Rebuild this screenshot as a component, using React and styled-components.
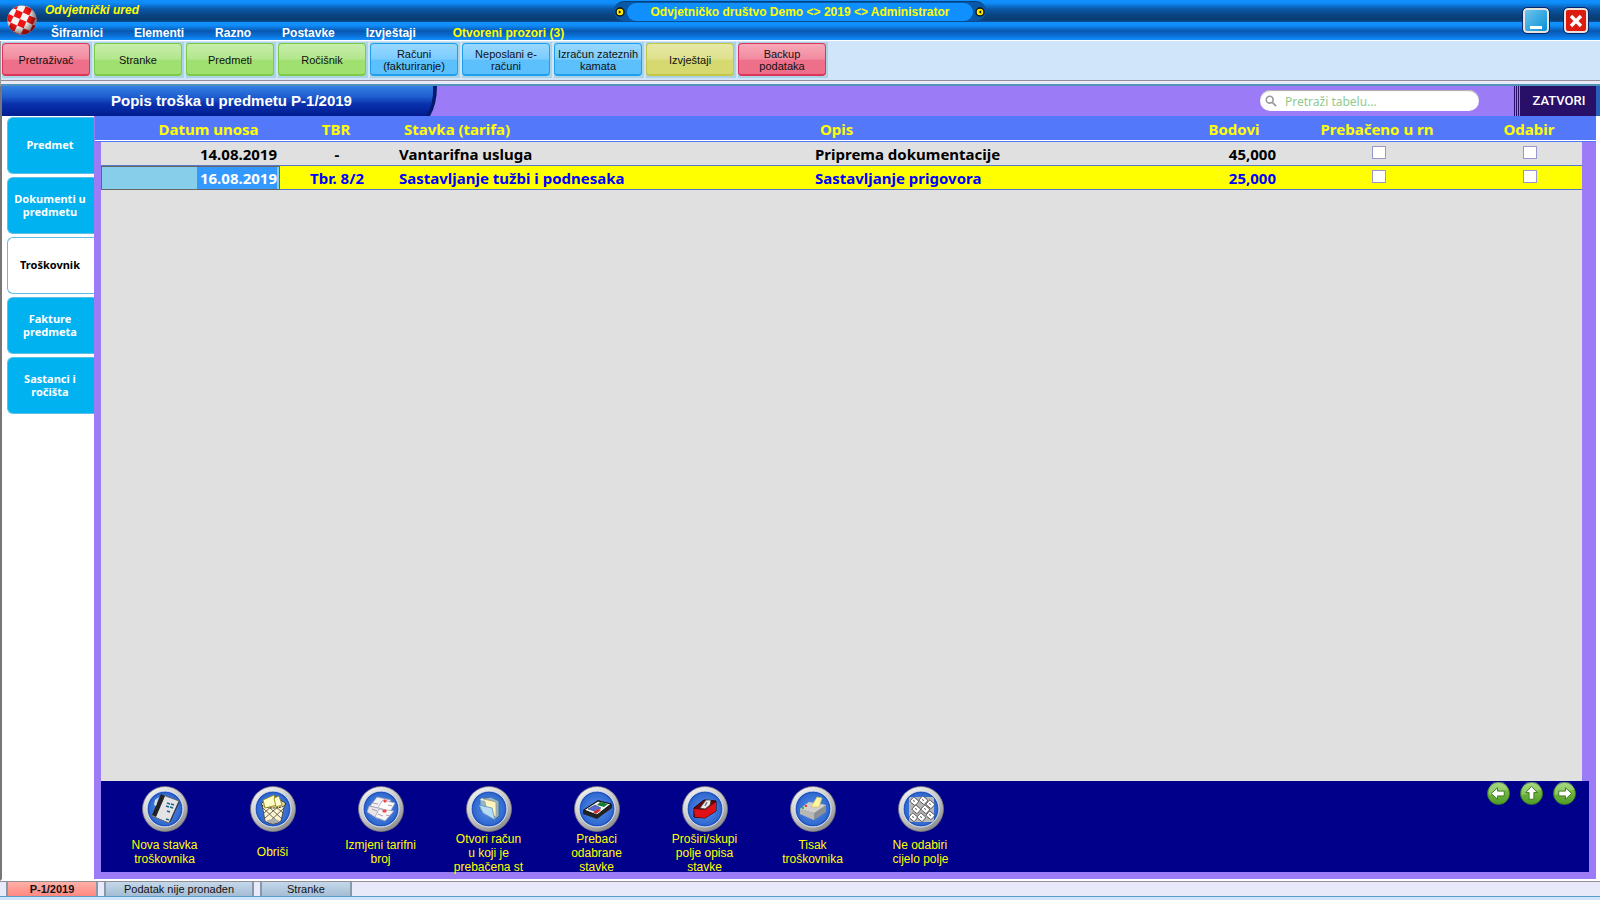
import * as React from 'react';
import styled, { createGlobalStyle } from "styled-components";


const tools = [
    { label: "Pretraživač", tone: "red" },
    { label: "Stranke", tone: "green" },
    { label: "Predmeti", tone: "green" },
    { label: "Ročišnik", tone: "green" },
    { label: "Računi\n(fakturiranje)", tone: "blue" },
    { label: "Neposlani e-\nračuni", tone: "blue" },
    { label: "Izračun zateznih\nkamata", tone: "blue" },
    { label: "Izvještaji", tone: "olive" },
    { label: "Backup\npodataka", tone: "red" },
];

const tones = {
    red: { top: "#f7a9b8", mid: "#f28a9f", low: "#ee6f8a", edge: "#dc3358" },
    green: { top: "#c6eeaa", mid: "#b3e68d", low: "#9fe070", edge: "#7ccb46" },
    blue: { top: "#99d9ff", mid: "#7accff", low: "#5cc0fc", edge: "#1c9ff0" },
    olive: { top: "#e6e8a6", mid: "#dfe18d", low: "#d6d96f", edge: "#c3c544" },
};

const menu = ["Šifrarnici", "Elementi", "Razno", "Postavke", "Izvještaji"];

const sideTabs = ["Predmet", "Dokumenti u\npredmetu", "Troškovnik", "Fakture\npredmeta", "Sastanci i\nročišta"];

const rows = [
    { id: 1, date: "14.08.2019", tbr: "-", item: "Vantarifna usluga", desc: "Priprema dokumentacije", points: "45,000" },
    { id: 2, date: "16.08.2019", tbr: "Tbr. 8/2", item: "Sastavljanje tužbi i podnesaka", desc: "Sastavljanje prigovora", points: "25,000", selected: true },
];

function Ball() {
    const squares = [];
    for (let r = 0; r < 6; r++) {
        for (let c = 0; c < 6; c++) {
            if ((r + c) % 2 === 0) squares.push(<rect key={`${r}-${c}`} x={-21 + c * 7} y={-21 + r * 7} width="7" height="7" />);
        }
    }
    return (
        <svg width="30" height="32" viewBox="0 0 30 32" aria-hidden="true">
            <defs>
                <clipPath id="ballClip"><circle cx="15" cy="16" r="14.6" /></clipPath>
                <radialGradient id="ballShade" cx="0.4" cy="0.38" r="0.64">
                    <stop offset="0.5" stopColor="#000" stopOpacity="0" />
                    <stop offset="1" stopColor="#200" stopOpacity="0.65" />
                </radialGradient>
            </defs>
            <g clipPath="url(#ballClip)">
                <rect width="30" height="32" fill="#f4f4f4" />
                <g transform="translate(13 15) rotate(24)" fill="#f01414">{squares}</g>
                <rect width="30" height="32" fill="url(#ballShade)" />
            </g>
        </svg>
    );
}

function Knob({ flip }) {
    return (
        <svg width="10" height="10" viewBox="0 0 10 10" aria-hidden="true">
            <circle cx="5" cy="5" r="4" fill="#ffee00" stroke="#111" strokeWidth="1.4" />
            <path d={flip ? "M6.2 3.2L3.8 5L6.2 6.8z" : "M3.8 3.2L6.2 5L3.8 6.8z"} fill="#111" />
        </svg>
    );
}

// drawings inside the round toolbar buttons, on a 46x46 grid
const glyphs = {
    notebook: (
        <g>
            <path d="M21 9L37 15L27 37L10 30z" fill="#e4e3e6" stroke="#555" strokeWidth="0.8" />
            <path d="M19 8L23 10L14 31L10 29z" fill="#222" />
            <path d="M13 14L17 11L14 20L12 19z" fill="#d8dce6" />
            <path d="M25 17l3 1M29 18l3 1M24 20l3 1M28 21l3 1M25 25l3 1M24 33l3 1" stroke="#16658f" strokeWidth="1.400" />
            <path d="M28 36L37 16" stroke="#333" strokeWidth="1" />
        </g>
    ),
    basket: (
        <g>
            <path d="M12 18L15 35Q23 41 31 35L35 17z" fill="#fff6cf" stroke="#333" strokeWidth="0.8" />
            <path d="M13 22l16 15M17 19l15 14M24 19l9 8M34 22L18 37M30 19L15 32M23 19L14 27" stroke="#444" strokeWidth="0.8" fill="none" />
            <path d="M16 35Q23 31 30 35Q23 40 16 35z" fill="#aaa" />
            <ellipse cx="23.500" cy="18" rx="12" ry="4" fill="#ddd699" stroke="#222" strokeDasharray="2 1" />
            <path d="M13 14L24 9L27 19L15 22z" fill="#ffffc8" stroke="#8a7b00" strokeWidth="0.8" />
            <path d="M24 12L29 10L32 19L26 21z" fill="#fffbd0" stroke="#8a7b00" strokeWidth="0.8" />
        </g>
    ),
    cards: (
        <g>
            <path d="M19 11L33 14L26 24L12 20z" fill="#f5f0f2" stroke="#99a" strokeWidth="0.7" />
            <path d="M25 14L37 17L32 26L19 23z" fill="#fff" stroke="#99a" strokeWidth="0.7" />
            <path d="M11 20L25 23L20 33L9 26z" fill="#e8e4ea" stroke="#99a" strokeWidth="0.7" />
            <path d="M21 23L36 25L27 35L17 31z" fill="#f8f5f6" stroke="#99a" strokeWidth="0.7" />
            <path d="M26 14h2v2h-2zM25 24h3v2h-3z" fill="#f04b50" stroke="#f04b50" />
            <path d="M30 19l4 1M15 17l5 1M28 29l4 1M14 23l5 2M20 28l5 2" stroke="#a8a0b0" />
        </g>
    ),
    folder: (
        <g>
            <path d="M14 13L25 11L33 15L33 30L28 34L14 24z" fill="#8db6d8" stroke="#3d638c" strokeWidth="0.8" />
            <path d="M18 13L30 16L30 31L22 27z" fill="#fdf5c0" stroke="#a99c60" strokeWidth="0.8" />
            <path d="M13 19L26 22L29 34L17 27z" fill="#b8dcf6" stroke="#5b90bd" strokeWidth="0.8" />
            <path d="M14 14l6 1l-4-3z" fill="#eee" />
        </g>
    ),
    calculator: (
        <g>
            <path d="M9 24L24 14L38 18L38 22L23 33L9 28z" fill="#222" />
            <path d="M10 24L24 15L37 18L23 29z" fill="#f5f5f5" stroke="#111" />
            <path d="M26 16L34 18L30 21L23 19z" fill="#167a35" />
            <path d="M21 19L27 22L20 25L14 23z" fill="#5966d8" stroke="#234" strokeWidth="0.5" />
            <path d="M19 26L25 23L27 24L22 28z" fill="#d62828" />
        </g>
    ),
    tape: (
        <g>
            <path d="M12 22L22 14L34 15L34 25L23 32L12 31z" fill="#6c0509" stroke="#250002" />
            <path d="M12 23L23 24L34 16L34 25L23 32L13 31z" fill="#df1018" />
            <path d="M18 22L24 14L29 14L28 19L23 23z" fill="#eee" stroke="#444" strokeWidth="0.8" />
            <path d="M23 20L25 16" stroke="#777" strokeWidth="1.500" />
        </g>
    ),
    printer: (
        <g>
            <path d="M10 23L19 16L36 19L36 26L24 34L10 28z" fill="#8d9092" />
            <path d="M10 23L19 16L36 19L24 27z" fill="#cfcfcf" />
            <path d="M21 21L27 11L32 12L29 21z" fill="#fff6a0" stroke="#c9bd62" strokeWidth="0.7" />
            <path d="M10 23L24 27L24 34L10 28z" fill="#b7b8b8" />
            <path d="M15 20h2" stroke="#ec3c2a" strokeWidth="2" />
            <path d="M12 22h2" stroke="#35b94b" strokeWidth="2" />
        </g>
    ),
    keys: (
        <g>
            <rect x="11" y="11" width="25" height="25" rx="2" fill="#b8b8b8" />
            {[[13, 12], [22, 11], [29, 15], [15, 20], [24, 20], [12, 28], [20, 28], [29, 26]].map(([x, y]) => (
                <g key={`${x}-${y}`} transform={`rotate(40 ${x + 3} ${y + 3})`}>
                    <rect x={x} y={y} width="7" height="6" rx="1" fill="#fff" stroke="#444" strokeWidth="0.8" />
                    <path d={`M${x + 2} ${y + 3}h2`} stroke="#555" />
                </g>
            ))}
        </g>
    ),
};

const actions = [
    { label: "Nova stavka\ntroškovnika", glyph: "notebook" },
    { label: "Obriši", glyph: "basket" },
    { label: "Izmjeni tarifni\nbroj", glyph: "cards" },
    { label: "Otvori račun\nu koji je\nprebačena st", glyph: "folder" },
    { label: "Prebaci\nodabrane\nstavke", glyph: "calculator" },
    { label: "Proširi/skupi\npolje opisa\nstavke", glyph: "tape" },
    { label: "Tisak\ntroškovnika", glyph: "printer" },
    { label: "Ne odabiri\ncijelo polje", glyph: "keys", left: true },
];

function RoundIcon({ name }) {
    return (
        <svg width="46" height="46" viewBox="0 0 46 46" aria-hidden="true">
            <circle cx="23" cy="23" r="22.500" fill="url(#rim)" stroke="#777" strokeWidth="0.8" />
            <circle cx="23" cy="23" r="18" fill="#2457bd" stroke="#e8ecf4" strokeWidth="1" />
            <circle cx="23" cy="23" r="16" fill="url(#disc)" />
            {glyphs[name]}
        </svg>
    );
}

function Arrow({ turn }) {
    return (
        <svg width="23" height="23" viewBox="0 0 24 24" aria-hidden="true">
            <circle cx="12" cy="12" r="11.500" fill="url(#leaf)" stroke="#3d7a1d" strokeWidth="0.8" />
            <path d="M2 10A10 10 0 0 1 22 8Q12 9 2 14z" fill="#fff" opacity="0.22" />
            <path
                transform={`rotate(${turn} 12 12)`}
                d="M4.500 12L11 6V9.500H18V14.500H11V18z"
                fill="#fff" stroke="#3c7a20" strokeWidth="1" />
        </svg>
    );
}

export default function App() {

    const [query, setQuery] = React.useState("");
    const [date, setDate] = React.useState("16.08.2019");

    return (
        <Page>
            <GlobalStyle />
            {/* gradients shared by the footer icons */}
            <svg width="0" height="0" aria-hidden="true">
                <defs>
                    <linearGradient id="rim" x1="0.2" y1="0" x2="0.8" y2="1">
                        <stop offset="0" stopColor="#f4f4f4" /><stop offset="0.5" stopColor="#c4c4c4" /><stop offset="1" stopColor="#888" />
                    </linearGradient>
                    <radialGradient id="disc"><stop offset="0" stopColor="#5b93ee" /><stop offset="1" stopColor="#2f68cf" /></radialGradient>
                    <linearGradient id="leaf" x1="0" y1="0" x2="0" y2="1">
                        <stop offset="0" stopColor="#8ccf5a" /><stop offset="0.5" stopColor="#6db53a" /><stop offset="1" stopColor="#4f9a28" />
                    </linearGradient>
                </defs>
            </svg>

            <Header>
                <Brand>
                    <Ball />
                    <div>
                        <AppName>Odvjetnički ured</AppName>
                        <Menu>
                            {menu.map((m) => <MenuItem key={m} href="#">{m}</MenuItem>)}
                            <MenuItem href="#" $open>Otvoreni prozori (3)</MenuItem>
                        </Menu>
                    </div>
                </Brand>
                <Pill><Knob /><PillText>Odvjetničko društvo Demo &lt;&gt; 2019 &lt;&gt; Administrator</PillText><Knob flip /></Pill>
                <WindowButtons>
                    <WindowButton aria-label="Minimize">
                        <svg width="20" height="20"><path d="M4 16.500h12" stroke="#fff" strokeWidth="3" /></svg>
                    </WindowButton>
                    <WindowButton aria-label="Close" $close>
                        <svg width="20" height="20"><path d="M5 5l10 10M15 5l-10 10" stroke="#fff" strokeWidth="3.400" /></svg>
                    </WindowButton>
                </WindowButtons>
            </Header>

            <Toolbar>
                {tools.map((t) => <ToolSlot key={t.label}><ToolButton $tone={tones[t.tone]}>{t.label}</ToolButton></ToolSlot>)}
            </Toolbar>

            <TitleRow>
                <Title>
                    <TitleText>Popis troška u predmetu P-1/2019</TitleText>
                    <svg width="14" height="30" viewBox="0 0 14 30" aria-hidden="true">
                        <defs>
                            <linearGradient id="cap" x1="0" y1="0" x2="0" y2="1">
                                <stop offset="0" stopColor="#357fe3" /><stop offset="0.35" stopColor="#1f5fd0" /><stop offset="0.6" stopColor="#0a31ae" /><stop offset="1" stopColor="#001c90" />
                            </linearGradient>
                        </defs>
                        <path d="M0 0H14Q14 18 7 30H0z" fill="#041a6c" />
                        <path d="M0 0H10Q11 18 3 30H0z" fill="url(#cap)" />
                    </svg>
                </Title>
                <Search>
                    <svg width="12" height="12" viewBox="0 0 14 14" aria-hidden="true">
                        <circle cx="5.500" cy="5.500" r="4" fill="none" stroke="#999" strokeWidth="1.800" />
                        <path d="M8.500 8.500L13 13" stroke="#999" strokeWidth="2" />
                    </svg>
                    <SearchInput
                        aria-label="Pretraži tabelu"
                        placeholder="Pretraži tabelu..."
                        value={query}
                        onChange={(e) => setQuery(e.target.value)} />
                </Search>
                <CloseButton>ZATVORI</CloseButton>
            </TitleRow>

            <Main>
                <Side>
                    {sideTabs.map((s) => <SideTab key={s} $active={s === "Troškovnik"}>{s}</SideTab>)}
                </Side>
                <Content>
                    <Table>
                        <colgroup>
                            <col width="185" /><col width="114" /><col width="416" /><col />
                            <col width="108" /><col width="178" /><col width="130" />
                        </colgroup>
                        <thead>
                            <tr>
                                <Th $pad="0 0 0 42px">Datum unosa</Th>
                                <Th $pad="0 2px 0 0">TBR</Th>
                                <Th $align="left" $pad="0 0 0 10px">Stavka (tarifa)</Th>
                                <Th $align="left" $pad="0 0 0 10px">Opis</Th>
                                <Th>Bodovi</Th>
                                <Th>Prebačeno u rn</Th>
                                <Th $pad="0 4px 0 0">Odabir</Th>
                            </tr>
                        </thead>
                        <tbody>
                            {rows.map((row) => (
                                <Row key={row.id} $selected={row.selected}>
                                    <DateCell $selected={row.selected}>
                                        {row.selected
                                            ? <DateInput aria-label="Datum unosa" value={date} onChange={(e) => setDate(e.target.value)} />
                                            : row.date}
                                    </DateCell>
                                    <Td $align="center" $pad="0">{row.tbr}</Td>
                                    <Td>{row.item}</Td>
                                    <Td>{row.desc}</Td>
                                    <Td $align="right" $pad="0 12px 0 0">{row.points}</Td>
                                    <Td $align="center" $pad="0 0 0 4px"><Check type="checkbox" aria-label={`Prebačeno u rn ${row.date}`} /></Td>
                                    <LastCell><Check type="checkbox" aria-label={`Odabir ${row.date}`} /></LastCell>
                                </Row>
                            ))}
                        </tbody>
                    </Table>
                    <Empty />
                    <Footer>
                        <Actions>
                            {actions.map((a) => (
                                <Action key={a.glyph}>
                                    <RoundIcon name={a.glyph} />
                                    <ActionLabel><LabelText $left={a.left}>{a.label}</LabelText></ActionLabel>
                                </Action>
                            ))}
                        </Actions>
                        <Arrows>
                            <ArrowButton aria-label="Natrag"><Arrow turn={0} /></ArrowButton>
                            <ArrowButton aria-label="Gore"><Arrow turn={90} /></ArrowButton>
                            <ArrowButton aria-label="Naprijed"><Arrow turn={180} /></ArrowButton>
                        </Arrows>
                    </Footer>
                </Content>
            </Main>

            <Taskbar>
                <Task $width={92} $active>P-1/2019</Task>
                <Task $width={150}>Podatak nije pronađen</Task>
                <Task $width={92}>Stranke</Task>
            </Taskbar>
        </Page>
    );
}

const GlobalStyle = createGlobalStyle`
    *{
        box-sizing: border-box;
    }
    body{
        margin: 0;
        font-family: "Liberation Sans", Arial, sans-serif;
    }
    button{
        font-family: inherit;
        margin: 0;
        padding: 0;
        border: none;
        cursor: pointer;
    }
    svg{
        display: block;
        flex: none;
    }
`;

const Page = styled.div`
    display: flex;
    flex-direction: column;
    min-height: 100vh;
    background: #d0e5fa;
`;

const Header = styled.header`
    display: grid;
    grid-template-columns: 1fr auto 1fr;
    height: 41px;
    border-bottom: 1px solid #fff;
    background:
        linear-gradient(#1090ff 0, #0e8cf8 3px, #0a58a8 9px, #08417c 16px, #083c70 20px, #0a50a0 22px, #1090ff 22px, #1090ff 25px, #0858b0 31px, #0a70d8 36px, #1090ff 40px);
`;

const Brand = styled.div`
    display: flex;
    gap: 8px;
    padding: 4px 0 0 7px;
`;

const AppName = styled.div`
    font-size: 12px;
    line-height: 13px;
    font-weight: bold;
    font-style: italic;
    color: #ffff00;
`;

const Menu = styled.nav`
    display: flex;
    gap: 31px;
    padding: 9px 0 0 6px;
    white-space: nowrap;
`;

const MenuItem = styled.a`
    margin-left: ${(p) => (p.$open ? "6px" : 0)};
    font-size: 12px;
    line-height: 14px;
    font-weight: bold;
    text-decoration: none;
    color: ${(p) => (p.$open ? "#ffff00" : "#fff")};
`;

const Pill = styled.div`
    display: flex;
    align-items: center;
    justify-content: space-between;
    width: 372px;
    height: 20px;
    margin-top: 1px;
    padding: 0 1px;
    border-radius: 10px;
    background: #0858a8;
    border-top: 1px solid #06417c;
`;

const PillText = styled.div`
    width: 346px;
    height: 18px;
    border-radius: 9px;
    background: #1090ff;
    color: #ffff00;
    font-size: 12px;
    font-weight: bold;
    line-height: 18px;
    text-align: center;
    white-space: nowrap;
`;

const WindowButtons = styled.div`
    display: flex;
    justify-content: flex-end;
    gap: 15px;
    padding: 8px 12px 0 0;
`;

const WindowButton = styled.button`
    display: flex;
    align-items: center;
    justify-content: center;
    width: ${(p) => (p.$close ? 24 : 26)}px;
    height: 25px;
    border: 2px solid #e8e4dc;
    border-radius: 4px;
    outline: 1px solid #04246c;
    background: ${(p) => (p.$close ? "#dc1a10" : "linear-gradient(135deg, #6cc4ec, #0890d8)")};
`;

const Toolbar = styled.div`
    display: flex;
    gap: 2px;
    height: 45px;
    padding: 1px 0 0 1px;
    border-left: 1px solid #999;
    background: linear-gradient(#d0e5fa 39px, #938e98 39px, #938e98 40px, #e8eafa 40px, #e8eafa 43px, #4f93b9 43px, #4f93b9 45px);
`;

const ToolSlot = styled.div`
    width: 90px;
    height: 36px;
    padding: 1px 2px 2px 0;
    background: #acd3e4;
`;

const ToolButton = styled.button`
    width: 88px;
    height: 33px;
    padding-top: 2px;
    border: 1px solid ${(p) => p.$tone.edge};
    border-bottom-width: 2px;
    border-radius: 4px;
    background: linear-gradient(${(p) => p.$tone.top} 0, ${(p) => p.$tone.mid} 50%, ${(p) => p.$tone.low} 55%, ${(p) => p.$tone.low} 100%);
    font-size: 11px;
    line-height: 12px;
    white-space: pre;
    color: #111;
`;

const TitleRow = styled.div`
    display: flex;
    height: 30px;
    background: #9b7cf6;
    border-left: 2px solid #777;
    border-right: 4px solid #2860c0;
`;

const Title = styled.div`
    display: flex;
    margin-right: auto;
`;

const TitleText = styled.h1`
    width: 421px;
    margin: 0;
    padding-left: 38px;
    background: linear-gradient(#357fe3 0, #1f5fd0 35%, #0a31ae 60%, #001c90 100%);
    color: #fff;
    font-size: 15px;
    font-weight: bold;
    line-height: 30px;
    text-align: center;
`;

const Search = styled.label`
    display: flex;
    align-items: center;
    gap: 8px;
    width: 219px;
    height: 21px;
    margin: 4px 35px 0 0;
    padding-left: 5px;
    border-radius: 10px;
    background: #fff;
    box-shadow: inset 0 1px 1px #aaa;
`;

const SearchInput = styled.input`
    flex: 1;
    min-width: 0;
    padding: 3px 0 0;
    border: none;
    outline: none;
    background: none;
    font-family: "Noto Sans", sans-serif;
    font-size: 12px;
    line-height: 16px;
    &::placeholder{
        color: #90cc90;
        opacity: 1;
    }
`;

const CloseButton = styled.button`
    width: 82px;
    padding: 0 0 2px 8px;
    background: linear-gradient(90deg, #281068 1px, #9b7cf6 1px, #9b7cf6 2px, #281068 2px, #281068 3px, #9b7cf6 3px, #9b7cf6 4px, #281068 4px, #281068 5px, #9b7cf6 5px, #9b7cf6 6px, #281068 6px);
    color: #fff;
    font-family: Roboto, sans-serif;
    font-size: 13px;
    font-weight: 500;
`;

const Main = styled.div`
    display: flex;
    flex: 1;
    border-left: 2px solid #777;
    border-right: 4px solid #fff;
    border-bottom: 2px solid #fff;
`;

const Side = styled.nav`
    display: flex;
    flex-direction: column;
    gap: 3px;
    width: 92px;
    padding: 1px 0 0 5px;
    background: #fff;
`;

const SideTab = styled.button`
    height: 57px;
    padding: 0 2px 2px 0;
    border: 1px solid #5cc0e4;
    border-right: none;
    border-radius: 6px 0 0 6px;
    background: ${(p) => (p.$active ? "#fff" : "#00b2f0")};
    color: ${(p) => (p.$active ? "#000" : "#fff")};
    font-family: "Noto Sans", sans-serif;
    font-size: 11px;
    font-weight: bold;
    line-height: 13px;
    white-space: pre;
`;

const Content = styled.main`
    display: flex;
    flex-direction: column;
    flex: 1;
    min-width: 0;
    padding: 0 0 7px 1px;
    background: #9b7cf6;
`;

const Table = styled.table`
    width: 100%;
    table-layout: fixed;
    border-collapse: separate;
    border-spacing: 0;
    font-family: "Noto Sans", sans-serif;
    font-size: 15px;
    line-height: 22px;
    font-weight: bold;
    white-space: nowrap;
`;

const Th = styled.th`
    height: 26px;
    padding: ${(p) => p.$pad || 0};
    border-bottom: 1px solid #5478fa;
    background: linear-gradient(#5478fa 24px, #fff 24px);
    color: #ffff00;
    text-align: ${(p) => p.$align || "center"};
`;

const Row = styled.tr`
    color: ${(p) => (p.$selected ? "#0000ff" : "#000")};
    background: ${(p) => (p.$selected ? "#ffff00" : "#e0e0e0")};
`;

const Td = styled.td`
    height: 24px;
    padding: ${(p) => p.$pad || "0 0 0 5px"};
    box-shadow: inset 0 -1px 0 #5878c8;
    text-align: ${(p) => p.$align || "left"};
`;

const DateCell = styled(Td)`
    padding: 0 3px 0 0;
    text-align: right;
    border-left: 6px solid #9b7cf6;
    background: ${(p) => (p.$selected ? "#87ceeb" : "none")};
    box-shadow: ${(p) => (p.$selected ? "inset 0 0 0 1px #666" : "inset 0 -1px 0 #5878c8")};
`;

const DateInput = styled.input`
    display: block;
    width: 80px;
    height: 22px;
    margin-left: auto;
    padding: 0;
    border: none;
    background: #3399ff;
    color: #fff;
    font: inherit;
    text-align: right;
`;

const LastCell = styled(Td)`
    padding: 0 0 0 11px;
    text-align: center;
    border-right: 14px solid #9b7cf6;
`;

const Check = styled.input`
    appearance: none;
    display: block;
    width: 14px;
    height: 13px;
    margin: 0 auto 4px;
    border: 1px solid #9898d0;
    background: #fff;
    &:checked{
        background: #3399ff;
    }
`;

const Empty = styled.div`
    flex: 1;
    margin: 0 14px 0 6px;
    background: #e0e0e0;
`;

const Footer = styled.footer`
    display: flex;
    justify-content: space-between;
    height: 91px;
    margin: 0 7px 0 6px;
    padding-left: 9px;
    background: #00008b;
`;

const Actions = styled.div`
    display: flex;
`;

const Action = styled.button`
    display: flex;
    flex-direction: column;
    align-items: center;
    width: 108px;
    padding: 5px 0 0 1px;
    background: none;
`;

const ActionLabel = styled.span`
    display: flex;
    align-items: center;
    height: 42px;
`;

const LabelText = styled.span`
    color: #ffff00;
    font-size: 12px;
    line-height: 14px;
    white-space: pre;
    text-align: ${(p) => (p.$left ? "left" : "center")};
`;

const Arrows = styled.div`
    display: flex;
    gap: 10px;
    padding: 1px 13px 0 0;
`;

const ArrowButton = styled.button`
    width: 23px;
    height: 23px;
    background: none;
`;

const Taskbar = styled.div`
    display: flex;
    gap: 6px;
    height: 19px;
    padding-left: 6px;
    border-top: 1px solid #938e98;
    background: linear-gradient(#e8eafa 14px, #5c9cc8 14px, #5c9cc8 15px, #d0e5fa 15px);
`;

const Task = styled.button`
    width: ${(p) => p.$width}px;
    height: 14px;
    border-left: 2px solid #8898a8;
    border-right: 2px solid #8898a8;
    background: ${(p) => (p.$active ? "linear-gradient(#ffb0a8, #ff8880)" : "linear-gradient(#c4d8ea, #a4bcd4)")};
    color: #111;
    font-size: 11px;
    font-weight: ${(p) => (p.$active ? "bold" : "normal")};
    line-height: 14px;
`;
